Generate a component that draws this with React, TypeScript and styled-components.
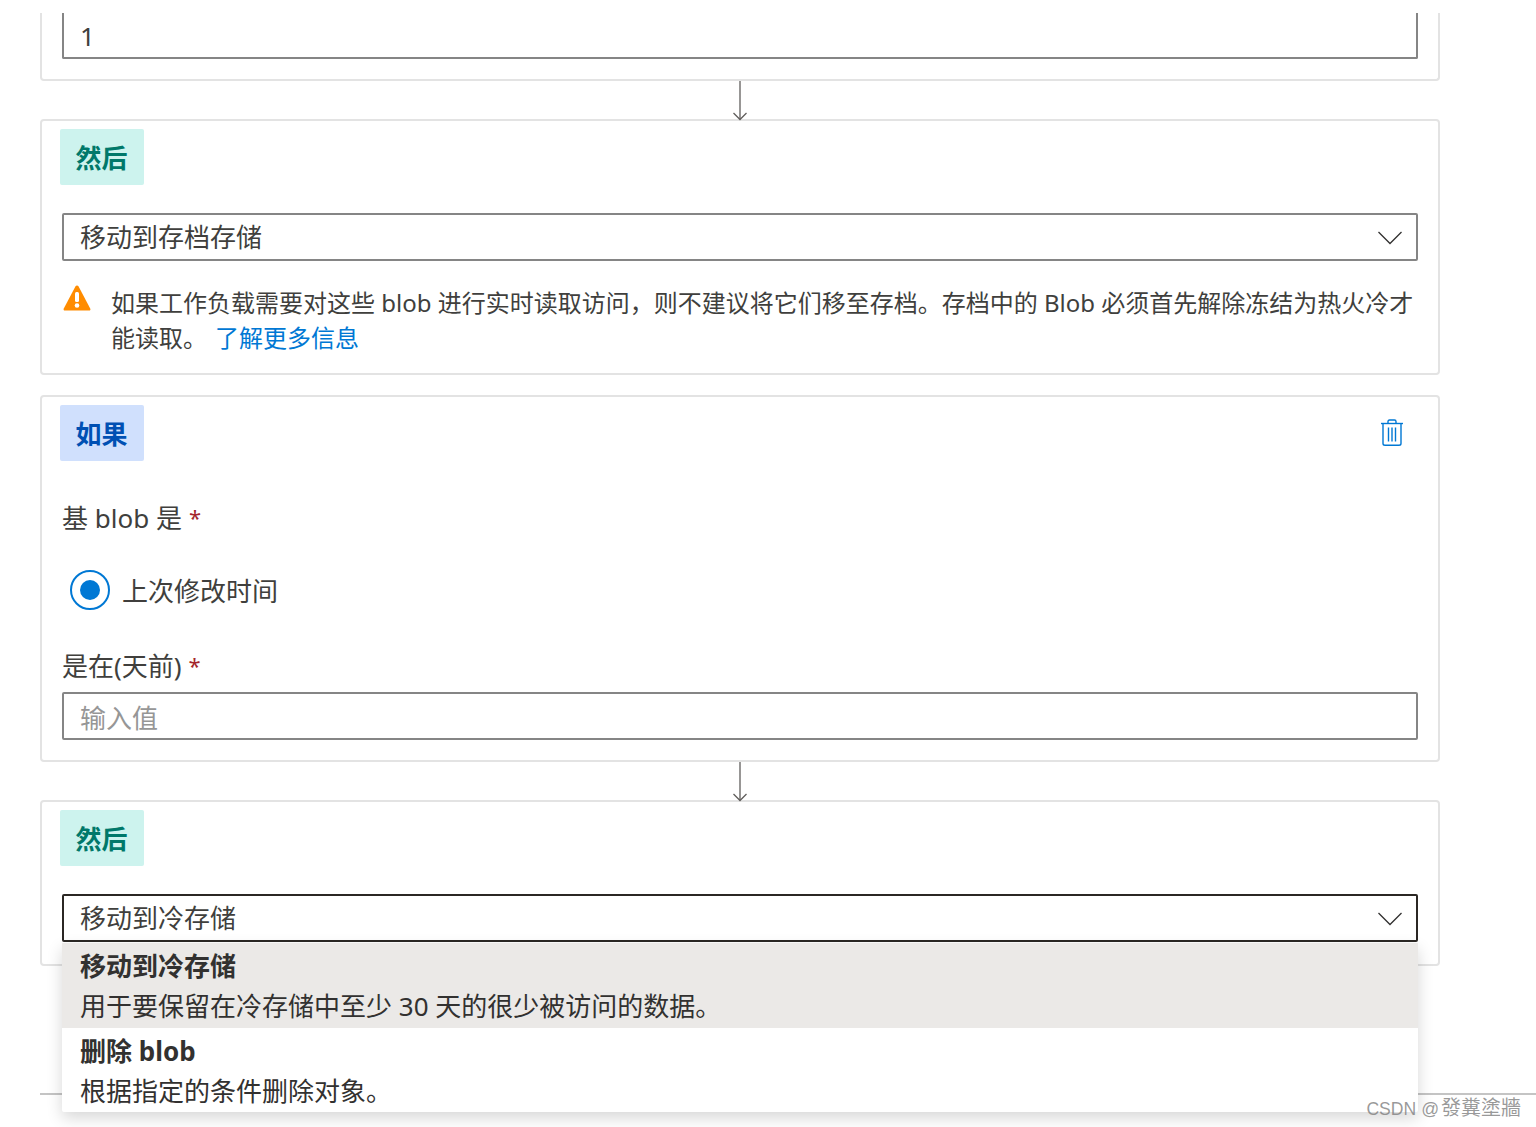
import React from "react";
import styled, { createGlobalStyle } from "styled-components";

const GlobalStyle = createGlobalStyle`
  html, body {
    margin: 0;
    padding: 0;
    background: #fff;
  }
  * {
    box-sizing: border-box;
  }
  body {
    font-family: "Noto Sans", "Noto Sans CJK SC", sans-serif;
    color: #403f3d;
  }
`;

const Arrow = () => (
  <svg width="18" height="40" viewBox="0 0 18 40" fill="none" stroke="#605e5c" strokeWidth="1.3">
    <path d="M9 0V38.5" />
    <path d="M2.5 32L9 38.5L15.5 32" />
  </svg>
);

const Chevron = () => (
  <svg width="24" height="14" viewBox="0 0 24 14" fill="none" stroke="#323130" strokeWidth="1.3">
    <path d="M.5 1L12 12.5L23.5 1" />
  </svg>
);

const TrashIcon = () => (
  <svg width="22" height="27" viewBox="0 0 22 27" fill="none" stroke="#0078d4" strokeWidth="1.4">
    <path d="M0 4.5H22" />
    <path d="M7 4.5V2.5Q7 1 8.5 1H13.5Q15 1 15 2.5V4.5" />
    <path d="M2 4.5V24.5Q2 26.3 4 26.3H18Q20 26.3 20 24.5V4.5" />
    <path d="M7.5 8.5V22.5M11 8.5V22.5M14.5 8.5V22.5" />
  </svg>
);

const WarningIcon = () => (
  <svg width="28" height="28" viewBox="0 0 28 28">
    <path
      d="M14 .5Q15 .5 15.6 1.6L27.2 23.5Q28 25.5 26 25.5H2Q0 25.5 .8 23.5L12.4 1.6Q13 .5 14 .5Z"
      fill="#ff8c00"
    />
    <rect x="12" y="7" width="4" height="10" rx="1.5" fill="#fff" />
    <circle cx="14" cy="20.5" r="2.3" fill="#fff" />
  </svg>
);

export default function App() {
  return (
    <>
      <GlobalStyle />
      <Page>
        <Column>
          <Card $clipped>
            <TextInput $clipped value="1" readOnly />
          </Card>
          <Connector>
            <Arrow />
          </Connector>
          <Card>
            <CardHeader>
              <Tag $kind="then">然后</Tag>
            </CardHeader>
            <Select>
              <span>移动到存档存储</span>
              <Chevron />
            </Select>
            <Warning>
              <WarningIconBox>
                <WarningIcon />
              </WarningIconBox>
              <WarningText>
                如果工作负载需要对这些 blob 进行实时读取访问，则不建议将它们移至存档。存档中的 Blob 必须首先解除冻结为热火冷才能读取。
                <LearnMore>了解更多信息</LearnMore>
              </WarningText>
            </Warning>
          </Card>
          <Spacer />
          <Card>
            <CardHeader>
              <Tag $kind="if">如果</Tag>
              <DeleteButton>
                <TrashIcon />
              </DeleteButton>
            </CardHeader>
            <BaseLabel>
              基 blob 是<Required>*</Required>
            </BaseLabel>
            <RadioRow>
              <RadioCircle>
                <RadioDot />
              </RadioCircle>
              上次修改时间
            </RadioRow>
            <DaysLabel>
              是在(天前)<Required>*</Required>
            </DaysLabel>
            <TextInput placeholder="输入值" readOnly />
          </Card>
          <Connector>
            <Arrow />
          </Connector>
          <Card>
            <CardHeader>
              <Tag $kind="then">然后</Tag>
            </CardHeader>
            <SelectWrap>
              <Select $open>
                <span>移动到冷存储</span>
                <Chevron />
              </Select>
              <Menu>
                <MenuOption $selected>
                  <OptionTitle>移动到冷存储</OptionTitle>
                  <OptionText>用于要保留在冷存储中至少 30 天的很少被访问的数据。</OptionText>
                </MenuOption>
                <MenuOption>
                  <OptionTitle>删除 blob</OptionTitle>
                  <OptionText>根据指定的条件删除对象。</OptionText>
                </MenuOption>
              </Menu>
            </SelectWrap>
          </Card>
          <Divider />
        </Column>
        <Watermark>
          <WatermarkLatin>CSDN @</WatermarkLatin>發糞塗牆
        </Watermark>
      </Page>
    </>
  );
}

const Page = styled.div`
  position: relative;
  height: 1127px;
  overflow: hidden;
  padding: 13px 0 0 40px;
`;

const Column = styled.div`
  width: 1400px;
`;

const Card = styled.section<{ $clipped?: boolean }>`
  border: 2px solid #e3e3e3;
  border-top: ${(p) => (p.$clipped ? "none" : "2px solid #e3e3e3")};
  border-radius: ${(p) => (p.$clipped ? "0 0 4px 4px" : "4px")};
  padding: ${(p) => (p.$clipped ? "0" : "8px")} 20px 20px;
`;

const Connector = styled.div`
  display: flex;
  justify-content: center;
  height: 38px;
`;

const Spacer = styled.div`
  height: 20px;
`;

const CardHeader = styled.div`
  display: flex;
  justify-content: space-between;
  align-items: center;
  margin-left: -2px;
`;

const Tag = styled.div<{ $kind: "if" | "then" }>`
  width: 84px;
  height: 56px;
  padding-right: 1px;
  display: flex;
  align-items: center;
  justify-content: center;
  border-radius: 2px;
  font-size: 26px;
  font-weight: 700;
  background: ${(p) => (p.$kind === "if" ? "#d0e0fd" : "#cdf3ee")};
  color: ${(p) => (p.$kind === "if" ? "#0050b3" : "#00786a")};
`;

const DeleteButton = styled.div`
  display: flex;
  margin: 0 15px 1px 0;
`;

const TextInput = styled.input<{ $clipped?: boolean }>`
  display: block;
  width: 100%;
  height: ${(p) => (p.$clipped ? "46px" : "48px")};
  border: 2px solid #858585;
  border-top: ${(p) => (p.$clipped ? "none" : "2px solid #858585")};
  border-radius: ${(p) => (p.$clipped ? "0 0 2px 2px" : "2px")};
  padding: ${(p) => (p.$clipped ? "2px" : "3px")} 16px 0;
  outline: none;
  font: inherit;
  font-size: 26px;
  color: #403f3d;
  background: #fff;

  &::placeholder {
    color: #969696;
    opacity: 1;
  }
`;

const SelectWrap = styled.div`
  position: relative;
  margin-bottom: 2px;
`;

const Select = styled.div<{ $open?: boolean }>`
  display: flex;
  align-items: center;
  justify-content: space-between;
  height: 48px;
  margin-top: 28px;
  padding: 0 14px 0 16px;
  border: 2px solid ${(p) => (p.$open ? "#2b2724" : "#858585")};
  border-radius: 2px;
  font-size: 26px;

  span {
    margin-bottom: 2px;
  }

  svg {
    margin-top: 2px;
  }
`;

const Warning = styled.div`
  display: flex;
  margin: 24px 0 -2px;
`;

const WarningIconBox = styled.div`
  flex: none;
  width: 49px;
  padding-left: 1px;
`;

const WarningText = styled.p`
  margin: 0;
  font-size: 24px;
  line-height: 35px;
`;

const LearnMore = styled.a`
  margin-left: 8px;
  color: #0078d4;
`;

const BaseLabel = styled.div`
  margin-top: 39px;
  font-size: 26px;
  line-height: 36px;
`;

const DaysLabel = styled(BaseLabel)`
  margin-top: 38px;
  margin-bottom: 7px;
`;

const Required = styled.span`
  position: relative;
  top: -2px;
  margin-left: 7px;
  color: #a4262c;
  font-size: 22px;
`;

const RadioRow = styled.div`
  display: flex;
  align-items: center;
  gap: 12px;
  margin: 33px 0 0 8px;
  font-size: 26px;
`;

const RadioCircle = styled.span`
  display: flex;
  align-items: center;
  justify-content: center;
  width: 40px;
  height: 40px;
  border: 2px solid #0078d4;
  border-radius: 50%;
`;

const RadioDot = styled.span`
  width: 20px;
  height: 20px;
  border-radius: 50%;
  background: #0078d4;
`;

const Menu = styled.div`
  position: absolute;
  z-index: 2;
  top: 49px;
  left: 0;
  right: 0;
  height: 169px;
  display: flex;
  flex-direction: column;
  background: #fff;
  box-shadow: 0 6px 16px rgba(0, 0, 0, 0.16);
  border-radius: 0 0 2px 2px;
`;

const MenuOption = styled.div<{ $selected?: boolean }>`
  flex: 1;
  padding: 3px 18px 0;
  background: ${(p) => (p.$selected ? "#ebe9e7" : "transparent")};
  color: #323130;
`;

const OptionTitle = styled.div`
  font-size: 26px;
  font-weight: 700;
  line-height: 40px;
`;

const OptionText = styled.div`
  font-size: 26px;
  line-height: 40px;
`;

const Divider = styled.div`
  height: 2px;
  margin: 127px -96px 0 0;
  background: #c4c4c4;
`;

const Watermark = styled.div`
  position: absolute;
  z-index: 3;
  right: 15px;
  top: 1095px;
  font-family: "Liberation Sans", "Noto Sans CJK TC", sans-serif;
  font-size: 20px;
  line-height: 26px;
  color: rgba(120, 120, 120, 0.75);
`;

const WatermarkLatin = styled.span`
  font-size: 17.6px;
  margin-right: 2px;
`;
